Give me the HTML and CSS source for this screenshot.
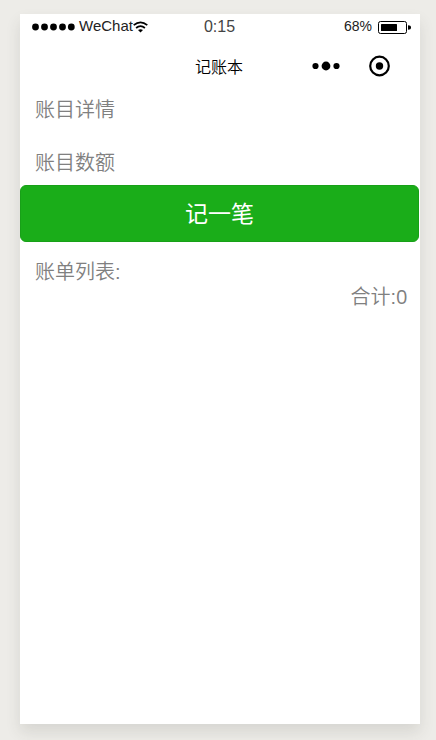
FILE: index.html
```html
<!DOCTYPE html>
<html lang="zh-CN">
<head>
<meta charset="utf-8">
<title>记账本</title>
<link rel="stylesheet" href="styles.css">
</head>
<body>
<main class="phone">
  <header class="status">
    <div class="carrier">
      <svg class="signal" width="43" height="8" viewBox="0 0 43 8"><circle cx="3.5" cy="4" r="3.4"/><circle cx="12.5" cy="4" r="3.4"/><circle cx="21.5" cy="4" r="3.4"/><circle cx="30.5" cy="4" r="3.4"/><circle cx="39.3" cy="4" r="3.4"/></svg>
      <span class="network">WeChat</span>
      <svg class="wifi" width="15" height="12" viewBox="0 0 15 12"><path d="M.7 4.2Q7.5-1.6 14.3 4.2M3.1 7Q7.5 3.2 11.9 7" fill="none" stroke="#000" stroke-width="1.7"/><path d="M5 9Q7.5 7.4 10 9L7.5 11.6Z"/></svg>
    </div>
    <span class="time">0:15</span>
    <div class="power">
      <span class="percent">68%</span>
      <svg width="33" height="13" viewBox="0 0 33 13"><rect x=".5" y=".5" width="28" height="12" rx="2" fill="none" stroke="#000"/><rect x="3" y="3" width="16" height="7" rx=".5"/><path d="M30 4.3q3 0 3 2.2t-3 2.2z"/></svg>
    </div>
  </header>
  <nav class="navbar">
    <h1 class="title">记账本</h1>
    <div class="capsule">
      <svg width="28" height="9" viewBox="0 0 28 9"><circle cx="3.5" cy="4" r="3.1"/><circle cx="14" cy="4" r="4.4"/><circle cx="24.5" cy="4" r="3.1"/></svg>
      <svg width="22" height="22" viewBox="0 0 22 22"><circle cx="11.5" cy="11" r="9.3" fill="none" stroke="#000" stroke-width="2.2"/><circle cx="11.5" cy="11" r="3.7"/></svg>
    </div>
  </nav>
  <section class="form">
    <div class="field">账目详情</div>
    <div class="field amount">账目数额</div>
    <button class="submit">记一笔</button>
  </section>
  <section class="bill">
    <div class="list-title">账单列表:</div>
    <div class="total">合计:<span class="sum">0</span></div>
  </section>
</main>
</body>
</html>
```
FILE: styles.css
```css
* { box-sizing: border-box; }
body {
  margin: 0;
  height: 740px;
  padding: 14px 16px 16px 20px;
  overflow: hidden;
  background: #edece8;
  font-family: "Liberation Sans", "Noto Sans CJK SC", sans-serif;
  font-weight: 350;
}
svg { display: block; flex: none; overflow: visible; }
.phone {
  width: 400px;
  height: 710px;
  background: #fff;
  box-shadow: 0 8px 14px rgba(60, 60, 50, .12);
}
.status {
  display: grid;
  grid-template-columns: 1fr auto 1fr;
  align-items: center;
  height: 25px;
  padding: 0 9px 0 12px;
  color: #222;
}
.carrier { display: flex; align-items: center; font-size: 15px; }
.network { margin-top: -2px; }
.signal { margin: 1px 4px 0 0; }
.wifi { margin-top: 1px; }
.time { margin-left: -4px; font-size: 16px; color: #444; }
.power {
  display: flex;
  justify-content: flex-end;
  align-items: center;
  gap: 6px;
  font-size: 14px;
}
.percent { margin-top: -1px; }
.power svg { margin-top: 2px; }
.navbar {
  display: grid;
  grid-template-columns: 1fr auto 1fr;
  align-items: center;
  height: 55px;
  padding: 0 30px 0 28px;
}
.title {
  grid-column: 2;
  margin: 2px 0 0;
  font-size: 16px;
  line-height: 24px;
  font-weight: 350;
}
.capsule {
  display: flex;
  justify-content: flex-end;
  align-items: center;
  gap: 28px;
  margin-top: -1px;
}
.form, .bill { color: #808080; font-size: 20px; }
.field { height: 53px; padding: 1px 15px 0; line-height: 30px; }
.amount { height: 38px; }
.submit {
  display: block;
  width: 399px;
  height: 57px;
  padding: 0 0 2px;
  border: 1px solid #18a018;
  border-radius: 6px;
  background: #1aad19;
  color: #fff;
  font: 400 23px/53px "Noto Sans CJK SC", sans-serif;
}
.bill { padding: 15px 12.5px 0 15px; }
.list-title { line-height: 30px; }
.total { margin-top: -5px; text-align: right; line-height: 30px; }
.sum { font-family: "Open Sans", sans-serif; font-weight: 400; line-height: 1; }
```
